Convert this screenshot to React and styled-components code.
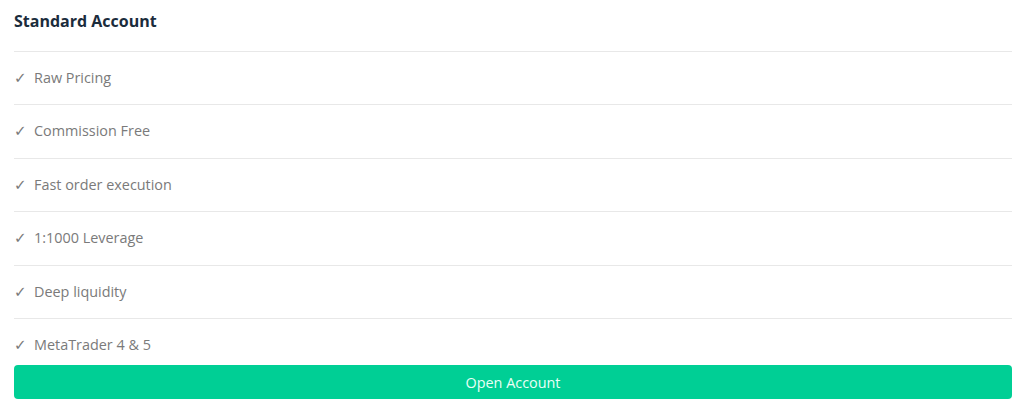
import React from "react";
import styled, { createGlobalStyle } from "styled-components";

const GlobalStyle = createGlobalStyle`
	body {
		margin: 0;
		background: #ffffff;
		font-family: "Open Sans", "Noto Sans", sans-serif;
	}
`;

const features = [
	"Raw Pricing",
	"Commission Free",
	"Fast order execution",
	"1:1000 Leverage",
	"Deep liquidity",
	"MetaTrader 4 & 5",
];

const App = () => {
	return (
		<>
			<GlobalStyle />
			<Card>
				<Title>Standard Account</Title>
				<List>
					{features.map((item, index) => (
						<Row key={index} $last={index === features.length - 1}>
							<Check>✓</Check>
							{item}
						</Row>
					))}
				</List>
				<OpenButton>Open Account</OpenButton>
			</Card>
		</>
	);
};

const Card = styled.div`
	padding: 0 12px 0 14px;
	background: #fff;
`;

const Title = styled.h3`
	margin: 0;
	padding: 10px 0 19px;
	font-size: 16px;
	line-height: 22px;
	font-weight: 700;
	color: #1b2c3c;
`;

const List = styled.ul`
	list-style: none;
	margin: 0;
	padding: 0;
`;

const Row = styled.li`
	display: flex;
	align-items: center;
	border-top: 1px solid #e8e8e8;
	padding: ${(p) => (p.$last ? "16px 0 10px" : "16px 0")};
	font-size: 14.4px;
	line-height: 20.4px;
	color: #7a7a7a;
`;

const Check = styled.span`
	width: 20px;
	font-family: "DejaVu Sans", sans-serif;
	font-size: 15px;
	color: #7a7a7a;
`;

const OpenButton = styled.button`
	display: flex;
	justify-content: center;
	align-items: center;
	width: 100%;
	height: 34px;
	border: none;
	border-radius: 4px;
	background-color: #00cf95;
	color: #eafff7;
	font-family: "Open Sans", "Noto Sans", sans-serif;
	font-size: 14.4px;
	cursor: pointer;
`;

export default App;
